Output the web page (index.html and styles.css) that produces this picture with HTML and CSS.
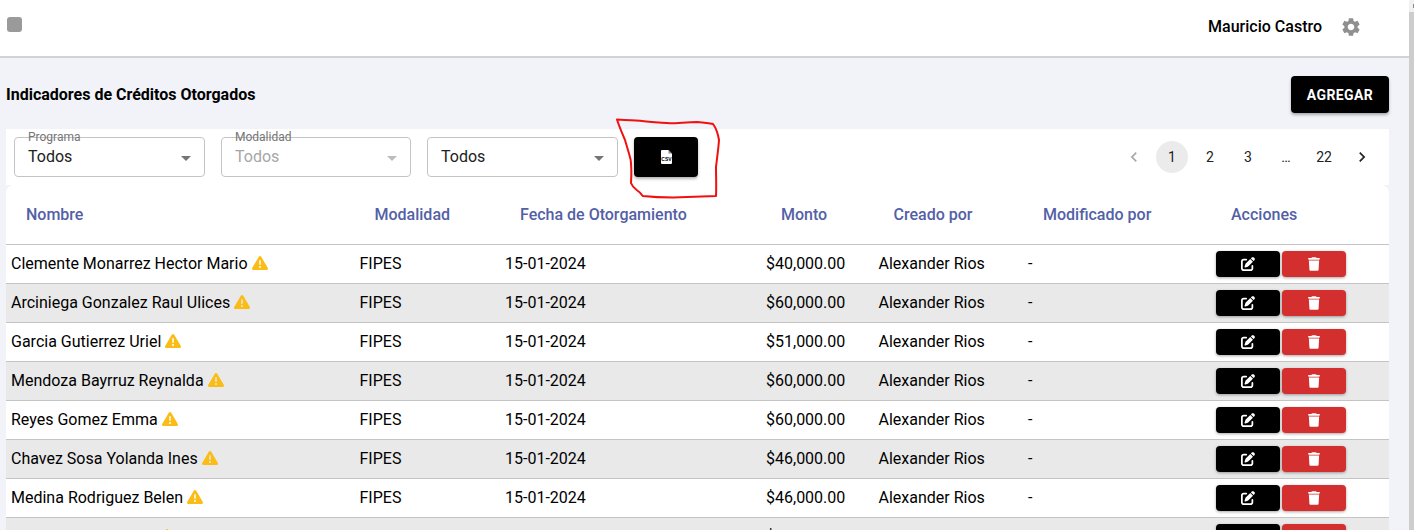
FILE: index.html
```html
<!DOCTYPE html>
<html lang="es">
<head>
  <meta charset="UTF-8">
  <meta name="viewport" content="width=device-width, initial-scale=1.0">
  <title>Indicadores de Créditos Otorgados</title>
  <link rel="stylesheet" href="styles.css">
</head>
<body>
  <svg class="icon-defs" width="0" height="0">
    <symbol id="i-edit" viewBox="0 0 512 512"><path d="M471.6 21.7c-21.9-21.9-57.3-21.9-79.2 0L362.3 51.7l97.9 97.9 30.1-30.1c21.9-21.9 21.9-57.3 0-79.2L471.6 21.7zm-299.2 220c-6.1 6.1-10.8 13.6-13.5 21.9l-29.6 88.8c-2.9 8.6-.6 18.1 5.8 24.6s15.9 8.7 24.6 5.8l88.8-29.6c8.2-2.7 15.7-7.4 21.9-13.5L437.7 172.3 339.7 74.3 172.4 241.7zM96 64C43 64 0 107 0 160V416c0 53 43 96 96 96H352c53 0 96-43 96-96V320c0-17.7-14.3-32-32-32s-32 14.3-32 32v96c0 17.7-14.3 32-32 32H96c-17.7 0-32-14.3-32-32V160c0-17.7 14.3-32 32-32h96c17.7 0 32-14.3 32-32s-14.3-32-32-32H96z"/></symbol>
    <symbol id="i-trash" viewBox="0 0 448 512"><path d="M135.2 17.7L128 32H32C14.3 32 0 46.3 0 64S14.3 96 32 96H416c17.7 0 32-14.3 32-32s-14.3-32-32-32H320l-7.2-14.3C307.4 6.8 296.3 0 284.2 0H163.8c-12.1 0-23.2 6.8-28.6 17.7zM416 128H32L53.2 467c1.6 25.3 22.6 45 47.9 45H346.9c25.3 0 46.3-19.7 47.9-45L416 128z"/></symbol>
    <symbol id="i-warn" viewBox="0 0 512 512"><path d="M256 32c14.2 0 27.3 7.5 34.5 19.8l216 368c7.3 12.4 7.3 27.7 .2 40.1S486.3 480 472 480H40c-14.3 0-27.6-7.7-34.7-20.1s-7-27.8 .2-40.1l216-368C228.7 39.5 241.8 32 256 32zm0 128c-13.3 0-24 10.7-24 24V296c0 13.3 10.7 24 24 24s24-10.7 24-24V184c0-13.3-10.7-24-24-24zm32 224a32 32 0 1 0 -64 0 32 32 0 1 0 64 0z"/></symbol>
  </svg>

  <div class="page">
    <div class="main">
      <header class="topbar">
        <span class="logo"></span>
        <div class="user">
          <span class="user-name">Mauricio Castro</span>
          <svg class="gear" viewBox="0 0 24 24"><path d="M19.14 12.94c.04-.3.06-.61.06-.94 0-.32-.02-.64-.07-.94l2.03-1.58c.18-.14.23-.41.12-.61l-1.92-3.32c-.12-.22-.37-.29-.59-.22l-2.39.96c-.5-.38-1.03-.7-1.62-.94l-.36-2.54c-.04-.24-.24-.41-.48-.41h-3.84c-.24 0-.43.17-.47.41l-.36 2.54c-.59.24-1.13.57-1.62.94l-2.39-.96c-.22-.08-.47 0-.59.22L2.74 8.87c-.12.21-.08.47.12.61l2.03 1.58c-.05.3-.09.63-.09.94s.02.64.07.94l-2.03 1.58c-.18.14-.23.41-.12.61l1.92 3.32c.12.22.37.29.59.22l2.39-.96c.5.38 1.03.7 1.62.94l.36 2.54c.05.24.24.41.48.41h3.84c.24 0 .44-.17.47-.41l.36-2.54c.59-.24 1.13-.56 1.62-.94l2.39.96c.22.08.47 0 .59-.22l1.92-3.32c.12-.22.07-.47-.12-.61l-2.01-1.58zM12 15.6c-1.98 0-3.6-1.62-3.6-3.6s1.62-3.6 3.6-3.6 3.6 1.62 3.6 3.6-1.62 3.6-3.6 3.6z"/></svg>
        </div>
      </header>

      <section class="content">
        <div class="title-row">
          <h1>Indicadores de Créditos Otorgados</h1>
          <button class="btn-add">AGREGAR</button>
        </div>

        <div class="filters">
          <div class="select">
            <span class="select-label">Programa</span>
            <span>Todos</span>
            <span class="caret"></span>
          </div>
          <div class="select disabled">
            <span class="select-label">Modalidad</span>
            <span>Todos</span>
            <span class="caret"></span>
          </div>
          <div class="select">
            <span>Todos</span>
            <span class="caret"></span>
          </div>
          <button class="btn-csv">
            <svg class="csv-icon" viewBox="0 0 11 14">
              <path fill="#fff" d="M1 0H7.500L11 3.500V13a1 1 0 0 1-1 1H1a1 1 0 0 1-1-1V1a1 1 0 0 1 1-1z"/>
              <path fill="#000" d="M7.500 0V3.500H11z" opacity="0.45"/>
              <text x="5.500" y="10.500" class="csv-text">CSV</text>
            </svg>
          </button>
          <nav class="pager">
            <span class="pager-arrow off">
              <svg viewBox="0 0 24 24"><path d="M15.41 7.41 14 6l-6 6 6 6 1.41-1.41L10.83 12z"/></svg>
            </span>
            <span class="pager-item current">1</span>
            <span class="pager-item">2</span>
            <span class="pager-item">3</span>
            <span class="pager-item dots">…</span>
            <span class="pager-item">22</span>
            <span class="pager-arrow">
              <svg viewBox="0 0 24 24"><path d="M10 6 8.59 7.41 13.17 12l-4.58 4.59L10 18l6-6z"/></svg>
            </span>
          </nav>
        </div>

        <div class="table-card">
          <table>
            <colgroup>
              <col class="c-name"><col class="c-mod"><col class="c-date"><col class="c-amount"><col class="c-by"><col class="c-edit"><col class="c-actions">
            </colgroup>
            <thead>
              <tr>
                <th>Nombre</th>
                <th>Modalidad</th>
                <th>Fecha de Otorgamiento</th>
                <th>Monto</th>
                <th>Creado por</th>
                <th>Modificado por</th>
                <th>Acciones</th>
              </tr>
            </thead>
            <tbody id="rows"></tbody>
          </table>
        </div>
      </section>
    </div>
    <div class="scrollbar"><span class="scroll-cap"></span></div>
  </div>

  <svg class="scribble" viewBox="0 0 1414 530">
    <path d="M617 119.500C625 120 633 120.500 640 120.700C650 122 660 122.500 670 123.300C680 123 688 122 697 122C704 122.500 709 123 713 124C716 128 718 134 719 140C718.500 148 717 158 716 167C716 177 716.500 187 716 196C703 196.500 688 197 673 197.500C662 197.500 652 197 642.700 196C641 193 639 191.500 636.700 190C634 188 632 186 631 183C631.500 175 631.500 167 630.700 160C629 153 627 147 625 140C622 133 619 126 617 119.500Z"/>
  </svg>

  <script src="rows.js"></script>
</body>
</html>
```
FILE: styles.css
```css
* {
  box-sizing: border-box;
}
html, body {
  margin: 0;
  height: 530px;
  overflow: hidden;
}
body {
  font-family: 'Roboto', sans-serif;
  color: #000;
  background: #f2f3f8;
  font-size: 16px;
}
.icon-defs {
  display: block;
}
.page {
  display: flex;
  height: 530px;
}
.main {
  flex: 1;
  min-width: 0;
}
.scrollbar {
  width: 5px;
  background: #cdcdcd;
}
.scroll-cap {
  display: flex;
  justify-content: flex-end;
  align-items: center;
  height: 12px;
  background: #f1f1f1;
}
.scroll-cap::after {
  content: '';
  width: 1px;
  height: 4px;
  background: #8a8a8a;
}

/* top bar */
.topbar {
  height: 58px;
  background: #fff;
  border-bottom: 2px solid #d2d3d6;
  display: flex;
  justify-content: space-between;
  padding: 16px 47px 0 7px;
}
.logo {
  width: 15px;
  height: 15px;
  margin-top: 1px;
  background: #9a9a9a;
  border-radius: 3px;
}
.user {
  display: flex;
  align-items: center;
  height: 21px;
  gap: 18px;
}
.user-name {
  font-weight: 500;
  font-size: 16px;
}
.gear {
  width: 22px;
  height: 22px;
  fill: #8f8f8f;
}

/* title */
.content {
  padding: 18px 20px 0 6px;
}
.title-row {
  display: flex;
  justify-content: space-between;
  align-items: center;
  height: 37px;
}
h1 {
  margin: 0;
  font-size: 16px;
  font-weight: 700;
}
.btn-add {
  width: 98px;
  height: 37px;
  background: #000;
  color: #fff;
  border: none;
  border-radius: 4px;
  font-family: inherit;
  font-size: 14px;
  font-weight: 700;
  letter-spacing: 0.4px;
  box-shadow: 0 2px 3px rgba(0,0,0,0.3);
}

/* filters */
.filters {
  margin-top: 16px;
  height: 56px;
  background: #fff;
  display: flex;
  align-items: center;
  gap: 16px;
  padding: 0 11px 0 8px;
}
.select {
  position: relative;
  width: 191px;
  height: 40px;
  border: 1px solid #c4c4c4;
  border-radius: 4px;
  display: flex;
  align-items: center;
  padding: 0 13px 2px;
  font-size: 16px;
  color: #212121;
}
.select-label {
  position: absolute;
  left: 13px;
  top: -8px;
  font-size: 12px;
  line-height: 14px;
  color: #757575;
}
.caret {
  position: absolute;
  right: 13px;
  top: 18px;
  border-left: 5px solid transparent;
  border-right: 5px solid transparent;
  border-top: 5px solid #757575;
}
.select.disabled {
  width: 190px;
  color: #a6a6a6;
}
.select.disabled .caret {
  border-top-color: #bdbdbd;
}
.btn-csv {
  width: 64px;
  height: 40px;
  background: #000;
  border: none;
  border-radius: 4px;
  display: flex;
  align-items: center;
  justify-content: center;
  box-shadow: 0 2px 3px rgba(0,0,0,0.3);
}
.csv-icon {
  width: 11px;
  height: 14px;
}
.csv-text {
  font-family: 'Liberation Sans', sans-serif;
  font-size: 5px;
  font-weight: 700;
  text-anchor: middle;
  fill: #000;
}

/* pagination */
.pager {
  margin-left: auto;
  display: flex;
  align-items: center;
  gap: 6px;
  font-size: 14px;
  color: #212121;
}
.pager-item, .pager-arrow {
  min-width: 32px;
  height: 32px;
  border-radius: 16px;
  display: flex;
  align-items: center;
  justify-content: center;
}
.pager-item.current {
  background: #ebebeb;
}
.pager-arrow svg {
  width: 20px;
  height: 20px;
  fill: #212121;
}
.pager-arrow.off svg {
  fill: #a8a8a8;
}

/* table */
.table-card {
  background: #fff;
  border-radius: 8px 8px 0 0;
  overflow: hidden;
}
table {
  width: 100%;
  border-collapse: collapse;
  table-layout: fixed;
}
.c-name { width: 348.5px; }
.c-mod { width: 145.5px; }
.c-date { width: 261px; }
.c-amount { width: 112.5px; }
.c-by { width: 149.5px; }
.c-edit { width: 188px; }
th {
  height: 59px;
  text-align: left;
  font-size: 16px;
  font-weight: 500;
  color: #5360a6;
  padding: 1px 0 0 20px;
  border-bottom: 1px solid #c4c4c4;
}
td {
  height: 39px;
  padding: 0 0 0 5px;
  border-bottom: 1px solid #c4c4c4;
}
tbody tr:nth-child(even) {
  background: #e9e9e9;
}
.warn {
  width: 16px;
  height: 16px;
  fill: #fbbc15;
  vertical-align: -2px;
}
.actions {
  display: flex;
  gap: 2px;
}
.act {
  width: 64px;
  height: 26px;
  border: none;
  border-radius: 4px;
  display: flex;
  align-items: center;
  justify-content: center;
  box-shadow: 0 1px 3px rgba(0,0,0,0.35);
}
.act svg {
  fill: #fff;
}
.act-edit {
  background: #000;
}
.act-edit svg {
  width: 14px;
  height: 14px;
}
.act-del {
  background: #d32f2f;
}
.act-del svg {
  width: 12px;
  height: 14px;
}

/* marker drawn on top of the screenshot */
.scribble {
  position: absolute;
  left: 0;
  top: 0;
  width: 1414px;
  height: 530px;
  pointer-events: none;
}
.scribble path {
  fill: none;
  stroke: #f01010;
  stroke-width: 2;
  stroke-linejoin: round;
}
```
FILE: rows.js
```js
const data = [
  ['Clemente Monarrez Hector Mario', '$40,000.00'],
  ['Arciniega Gonzalez Raul Ulices', '$60,000.00'],
  ['Garcia Gutierrez Uriel', '$51,000.00'],
  ['Mendoza Bayrruz Reynalda', '$60,000.00'],
  ['Reyes Gomez Emma', '$60,000.00'],
  ['Chavez Sosa Yolanda Ines', '$46,000.00'],
  ['Medina Rodriguez Belen', '$46,000.00'],
  ['Hernandez Ruiz Ana', '$60,000.00']
];

document.getElementById('rows').innerHTML = data.map(([name, amount]) => `
  <tr>
    <td>${name} <svg class="warn"><use href="#i-warn"/></svg></td>
    <td>FIPES</td>
    <td>15-01-2024</td>
    <td>${amount}</td>
    <td>Alexander Rios</td>
    <td>-</td>
    <td>
      <div class="actions">
        <button class="act act-edit"><svg><use href="#i-edit"/></svg></button>
        <button class="act act-del"><svg><use href="#i-trash"/></svg></button>
      </div>
    </td>
  </tr>`).join('');
```
